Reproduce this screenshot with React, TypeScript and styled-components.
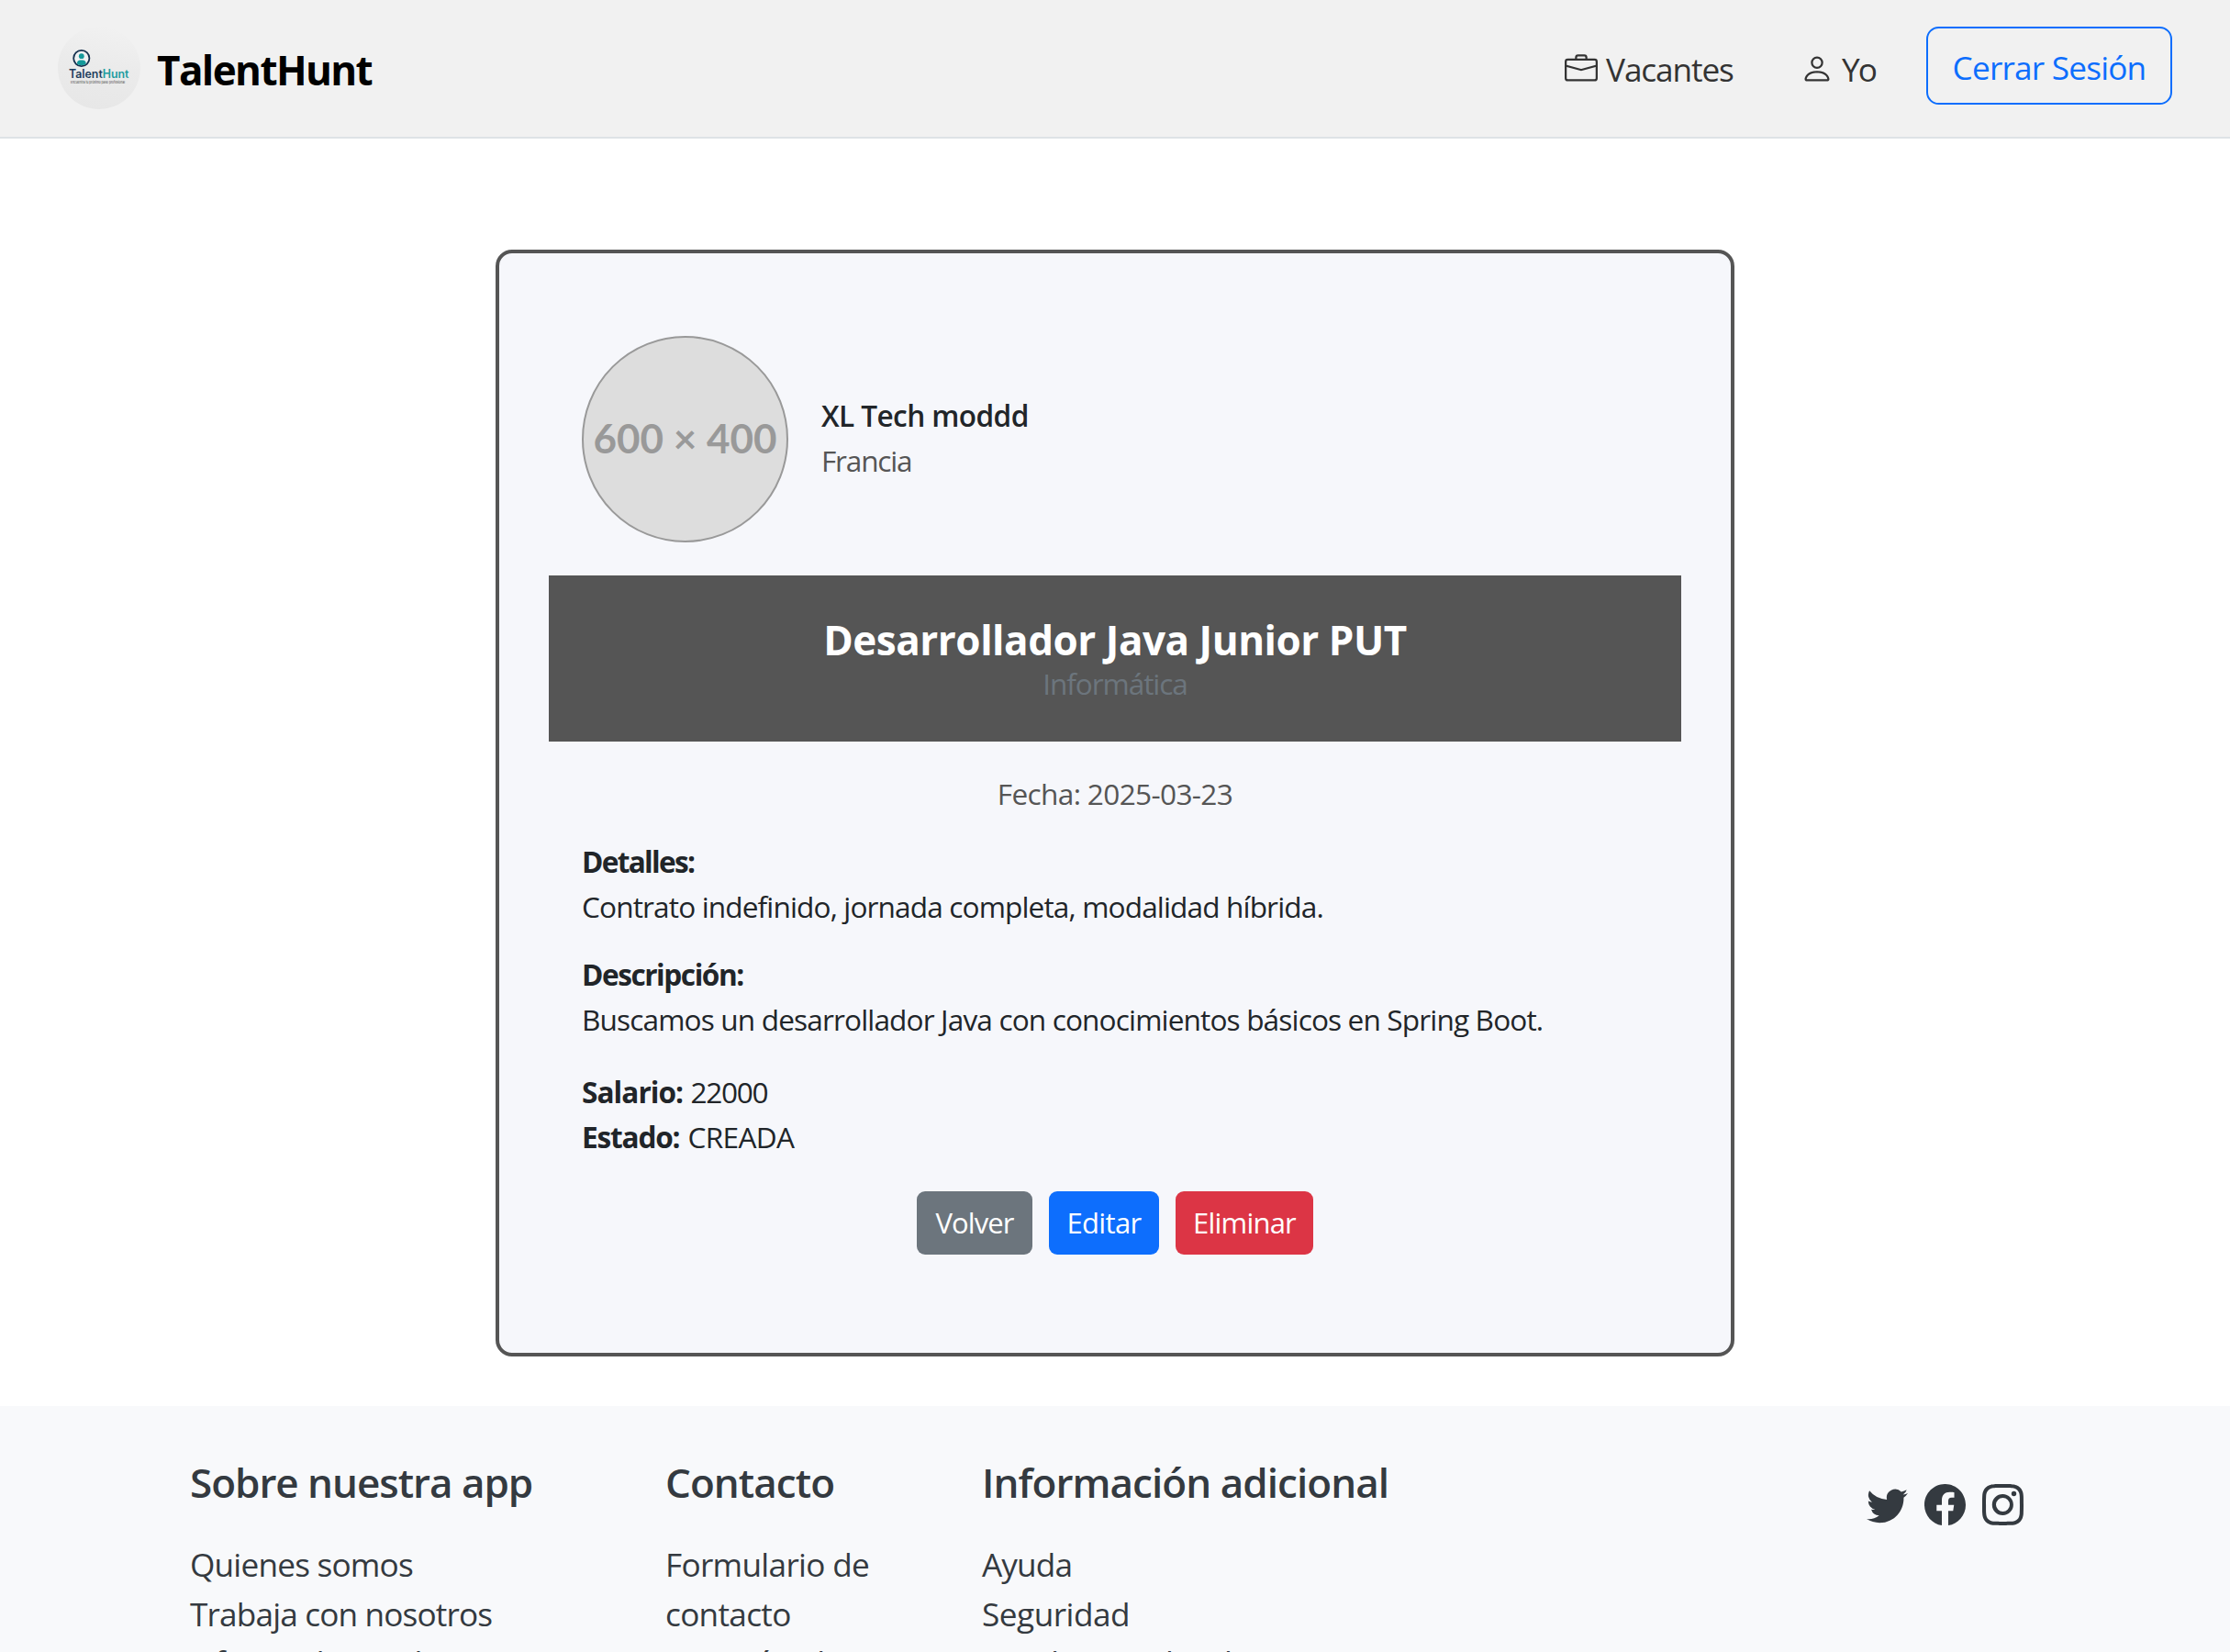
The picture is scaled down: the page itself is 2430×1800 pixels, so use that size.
import React from 'react';
import styled, { createGlobalStyle } from 'styled-components';
import { BsBriefcase, BsPerson, BsTwitter, BsFacebook, BsInstagram } from 'react-icons/bs';

const GlobalStyle = createGlobalStyle`
  *, *::before, *::after { box-sizing: border-box; }
  html, body { margin: 0; padding: 0; }
  body {
    background: #fff;
    color: #212529;
    font-family: "Segoe UI", "Open Sans", "Noto Sans", sans-serif;
    overflow: hidden;
  }
  h1, h2, h3, p, ul { margin: 0; padding: 0; font-weight: inherit; }
`;

const Page = styled.div`
  display: flex;
  flex-direction: column;
  height: 1800px;
  overflow: hidden;
`;

/* Header */
const Header = styled.header`
  display: flex;
  flex: none;
  align-items: center;
  justify-content: space-between;
  height: 151px;
  padding: 0 63px 1px;
  background: #f1f1f1;
  border-bottom: 2px solid #dee2e6;
`;

const Brand = styled.a`
  display: flex;
  align-items: center;
  gap: 18px;
  color: #000;
`;

const BrandName = styled.span`
  padding-top: 4px;
  font-size: 44px;
  font-weight: 700;
  line-height: 60px;
  letter-spacing: -1.6px;
`;

const Logo = styled.svg`
  display: block;
  width: 90px;
  height: 90px;
`;

const Nav = styled.nav`
  display: grid;
  grid-template-columns: 257px 137px 268px;
  align-items: center;
`;

const NavLink = styled.a<{ $ls: number }>`
  display: flex;
  align-items: center;
  gap: 9px;
  padding-top: 2px;
  color: #333;
  font-size: 35.2px;
  line-height: 54px;
  white-space: nowrap;
  letter-spacing: ${(p) => p.$ls}px;

  svg { width: 36px; height: 36px; flex: none; }
`;

const LogoutButton = styled.button`
  height: 85px;
  margin-bottom: 5px;
  padding: 3px 0 0;
  border: 2px solid #0d6efd;
  border-radius: 13.5px;
  background: transparent;
  color: #0d6efd;
  font: 400 35.2px/54px "Segoe UI", "Open Sans", "Noto Sans", sans-serif;
  letter-spacing: -0.8px;
`;

/* Offer card */
const Main = styled.main`
  display: flex;
  flex: none;
  justify-content: center;
  height: 1381px;
  padding-top: 121px;
`;

const Card = styled.article`
  width: 1350px;
  height: 1206px;
  padding: 90px 54px 0;
  border: 4px solid #555;
  border-radius: 18px;
  background: #f6f7fb;
  font-size: 31.6px;
  line-height: 48.6px;
`;

const Company = styled.div`
  display: flex;
  align-items: center;
  gap: 36px;
  padding: 0 36px;
`;

const Avatar = styled.div`
  display: flex;
  align-items: center;
  justify-content: center;
  width: 225px;
  height: 225px;
  padding-bottom: 3px;
  border: 2px solid #999;
  border-radius: 50%;
  background: #ddd;
  color: #999;
  font: 700 44px/54px Lato, sans-serif;
  white-space: nowrap;
`;

const CompanyText = styled.div`
  padding-bottom: 2px;
`;

const CompanyName = styled.p`
  font-weight: 600;
  letter-spacing: -0.6px;
`;

const CompanyPlace = styled.p`
  color: #555;
  letter-spacing: -1.2px;
`;

const TitleBand = styled.div`
  height: 181px;
  margin-top: 36px;
  padding-top: 44px;
  background: #555;
  text-align: center;
`;

const Title = styled.h1`
  color: #fff;
  font-size: 44px;
  font-weight: 700;
  line-height: 52px;
  letter-spacing: -0.47px;
`;

const Category = styled.p`
  color: #6c757d;
  line-height: 44px;
  letter-spacing: -1.08px;
`;

const DateLine = styled.p`
  margin-top: 33.2px;
  color: #555;
  text-align: center;
  letter-spacing: -0.65px;
`;

const Section = styled.section<{ $top: number }>`
  margin-top: ${(p) => p.$top}px;
  padding: 0 36px;
`;

const Label = styled.strong<{ $ls: number }>`
  font-weight: 700;
  letter-spacing: ${(p) => p.$ls}px;
`;

const Value = styled.span<{ $ls: number; $gap?: number }>`
  margin-left: ${(p) => p.$gap ?? 0}px;
  letter-spacing: ${(p) => p.$ls}px;
`;

const Actions = styled.div`
  display: flex;
  justify-content: center;
  gap: 18px;
  margin-top: 34.4px;
`;

const ActionButton = styled.button<{ $bg: string; $width: number; $ls: number }>`
  width: ${(p) => p.$width}px;
  height: 69px;
  padding: 0;
  border: 0;
  border-radius: 9px;
  background: ${(p) => p.$bg};
  color: #fff;
  font: 400 31px/47px "Segoe UI", "Open Sans", "Noto Sans", sans-serif;
  letter-spacing: ${(p) => p.$ls}px;
`;

/* Footer */
const Footer = styled.footer`
  display: grid;
  flex: none;
  grid-template-columns: 518px 345px 1fr auto;
  align-items: start;
  height: 420px;
  padding: 56px 225px 0 207px;
  background: #f8f9fb;
  color: #343a40;
`;

const FooterHeading = styled.h2<{ $ls: number }>`
  margin-bottom: 35px;
  font-size: 44px;
  font-weight: 600;
  line-height: 54px;
  white-space: nowrap;
  letter-spacing: ${(p) => p.$ls}px;
`;

const LinkList = styled.ul`
  list-style: none;
`;

const LinkItem = styled.li<{ $ls: number; $lift?: number }>`
  max-width: 330px;
  margin-top: ${(p) => -(p.$lift ?? 0)}px;
  font-size: 35.2px;
  line-height: 54px;
  letter-spacing: ${(p) => p.$ls}px;
`;

const Contact = styled.div`
  width: 237px;
`;

const Social = styled.div`
  display: flex;
  gap: 18px;
  padding-top: 29px;

  svg { display: block; width: 45px; height: 45px; }
`;

function BrandLogo() {
  return (
    <Logo viewBox="0 0 90 90" aria-label="TalentHunt">
      <defs>
        <linearGradient id="disc" x1="0.6" y1="0" x2="0.4" y2="1">
          <stop offset="0" stopColor="#f1f1f1" />
          <stop offset="0.45" stopColor="#ebebeb" />
          <stop offset="1" stopColor="#e7e7e7" />
        </linearGradient>
        <clipPath id="face"><circle cx="25.8" cy="34.5" r="7.8" /></clipPath>
      </defs>
      <circle cx="45" cy="45" r="45" fill="url(#disc)" />
      <circle cx="25.8" cy="34.5" r="8.6" fill="#eef1f2" stroke="#16324f" strokeWidth="1.8" />
      <g clipPath="url(#face)" fill="#15999a">
        <circle cx="25.8" cy="32.2" r="2.9" />
        <path d="M20.8 43v-2.6c0-2.6 1.6-4 3.8-4h2.4c2.2 0 3.8 1.4 3.8 4V43z" />
      </g>
      <text x="12" y="56" fontFamily="Inter, sans-serif" fontSize="12.6" fontWeight="600" fill="#1d3d5c" textLength="65.5" lengthAdjust="spacingAndGlyphs">
        Talent<tspan fill="#209c9f">Hunt</tspan>
      </text>
      <text x="14" y="61.6" fontFamily="Inter, sans-serif" fontSize="4" fill="#444" textLength="59" lengthAdjust="spacingAndGlyphs">
        Encuentra tu próximo paso profesional
      </text>
    </Logo>
  );
}

export default function App() {
  return (
    <Page>
      <GlobalStyle />
      <Header>
        <Brand>
          <BrandLogo />
          <BrandName>TalentHunt</BrandName>
        </Brand>
        <Nav>
          <NavLink $ls={-1.1}><BsBriefcase />Vacantes</NavLink>
          <NavLink $ls={-2}><BsPerson />Yo</NavLink>
          <LogoutButton>Cerrar Sesión</LogoutButton>
        </Nav>
      </Header>

      <Main>
        <Card>
          <Company>
            <Avatar>600 × 400</Avatar>
            <CompanyText>
              <CompanyName>XL Tech moddd</CompanyName>
              <CompanyPlace>Francia</CompanyPlace>
            </CompanyText>
          </Company>
          <TitleBand>
            <Title>Desarrollador Java Junior PUT</Title>
            <Category>Informática</Category>
          </TitleBand>
          <DateLine>Fecha: 2025-03-23</DateLine>
          <Section $top={25.6}>
            <p><Label $ls={-1.7}>Detalles:</Label></p>
            <p><Value $ls={-0.87}>Contrato indefinido, jornada completa, modalidad híbrida.</Value></p>
          </Section>
          <Section $top={25.6}>
            <p><Label $ls={-1.45}>Descripción:</Label></p>
            <p><Value $ls={-0.86}>Buscamos un desarrollador Java con conocimientos básicos en Spring Boot.</Value></p>
          </Section>
          <Section $top={31}>
            <p><Label $ls={-0.95}>Salario:</Label> <Value $ls={-1.3}>22000</Value></p>
            <p><Label $ls={-1.2}>Estado:</Label> <Value $ls={-0.7} $gap={1}>CREADA</Value></p>
          </Section>
          <Actions>
            <ActionButton $bg="#6c757d" $width={126} $ls={-0.9}>Volver</ActionButton>
            <ActionButton $bg="#0d6efd" $width={120} $ls={-0.65}>Editar</ActionButton>
            <ActionButton $bg="#dc3545" $width={150} $ls={-0.8}>Eliminar</ActionButton>
          </Actions>
        </Card>
      </Main>

      <Footer>
        <div>
          <FooterHeading $ls={-1.02}>Sobre nuestra app</FooterHeading>
          <LinkList>
            <LinkItem $ls={-0.8}>Quienes somos</LinkItem>
            <LinkItem $ls={-0.85}>Trabaja con nosotros</LinkItem>
            <LinkItem $ls={-0.8} $lift={1}>Ofertas de empleo</LinkItem>
          </LinkList>
        </div>
        <Contact>
          <FooterHeading $ls={-0.95}>Contacto</FooterHeading>
          <LinkList>
            <LinkItem $ls={-0.7}>Formulario de contacto</LinkItem>
            <LinkItem $ls={-0.8} $lift={1}>Atención al cliente</LinkItem>
          </LinkList>
        </Contact>
        <div>
          <FooterHeading $ls={-0.94}>Información adicional</FooterHeading>
          <LinkList>
            <LinkItem $ls={-0.9}>Ayuda</LinkItem>
            <LinkItem $ls={-0.5}>Seguridad</LinkItem>
            <LinkItem $ls={-0.8} $lift={1}>Condiciones legales</LinkItem>
          </LinkList>
        </div>
        <Social>
          <BsTwitter />
          <BsFacebook />
          <BsInstagram />
        </Social>
      </Footer>
    </Page>
  );
}
